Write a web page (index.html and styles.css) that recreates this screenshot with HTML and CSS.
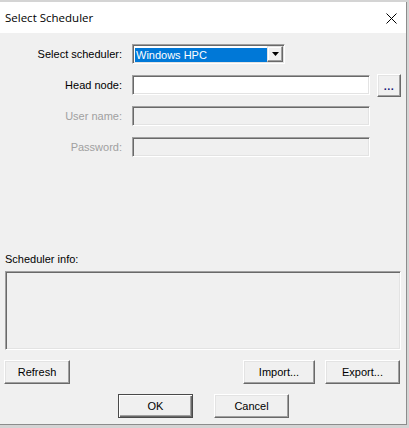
FILE: index.html
```html
<!DOCTYPE html>
<html>
<head>
<meta charset="utf-8">
<link rel="stylesheet" href="styles.css">
</head>
<body>
<div class="dialog">
  <div class="titlebar">
    <span class="title">Select Scheduler</span>
    <svg class="close" width="11" height="11" viewBox="0 0 11 11"><path d="M0.5 0.5 L10.5 10.5 M10.5 0.5 L0.5 10.5" stroke="#000" stroke-width="1" fill="none"/></svg>
  </div>
  <div class="content">
    <div class="form">
      <label class="lbl">Select scheduler:</label>
      <div class="combo">
        <div class="combo-sel">Windows HPC</div>
        <div class="combo-btn"><svg width="7" height="4" viewBox="0 0 7 4"><path d="M0 0 H7 L3.5 4 Z" fill="#000"/></svg></div>
      </div>
      <span></span>

      <label class="lbl">Head node:</label>
      <div class="edit"></div>
      <div class="btn btn-dots">...</div>

      <label class="lbl lbl-disabled">User name:</label>
      <div class="edit edit-disabled"></div>
      <span></span>

      <label class="lbl lbl-disabled">Password:</label>
      <div class="edit edit-disabled"></div>
      <span></span>
    </div>

    <div class="info-label">Scheduler info:</div>
    <div class="info-box"></div>

    <div class="row-actions">
      <div class="btn btn-refresh">Refresh</div>
      <div class="spacer"></div>
      <div class="btn btn-import">Import...</div>
      <div class="btn btn-export">Export...</div>
    </div>

    <div class="row-ok">
      <div class="btn btn-default">OK</div>
      <div class="btn btn-cancel">Cancel</div>
    </div>
  </div>
</div>
</body>
</html>
```

FILE: styles.css
```css
html, body {
  margin: 0;
  padding: 0;
}
body {
  background: #d4d4d4;
  width: 409px;
  height: 428px;
  overflow: hidden;
  font-family: "Liberation Sans", Arial, sans-serif;
  font-size: 11px;
  color: #000;
}
.dialog {
  margin-top: 2px;
  width: 406px;
  border-right: 1px solid #8c8c8c;
  border-bottom: 1px solid #8c8c8c;
  background: #f0f0f0;
}
.titlebar {
  height: 31px;
  background: #fff;
  display: flex;
  align-items: center;
  padding-left: 5px;
  padding-right: 8px;
}
.title {
  font-family: "Open Sans", "Noto Sans", sans-serif;
  font-size: 11.5px;
  flex: 1;
  color: #000;
}
.close {
  margin-right: 1px;
  margin-top: 1px;
}
.content {
  height: 391px;
  box-sizing: border-box;
  padding-top: 11px;
}
.form {
  display: grid;
  grid-template-columns: 132px 245px 24px;
  grid-auto-rows: 20px;
  row-gap: 11px;
  align-items: start;
}
.lbl {
  text-align: right;
  padding-right: 10px;
  line-height: 20px;
  white-space: nowrap;
}
.lbl-disabled {
  color: #a0a0a0;
}
.edit {
  width: 238px;
  height: 20px;
  box-sizing: border-box;
  background: #fff;
  border: 1px solid;
  border-color: #a0a0a0 #fff #fff #a0a0a0;
  box-shadow: inset 1px 1px 0 #696969, inset -1px -1px 0 #e3e3e3;
}
.edit-disabled {
  background: #f0f0f0;
}
.combo {
  width: 153px;
  height: 20px;
  box-sizing: border-box;
  background: #fff;
  border: 1px solid;
  border-color: #a0a0a0 #fff #fff #a0a0a0;
  box-shadow: inset 1px 1px 0 #696969, inset -1px -1px 0 #e3e3e3;
  padding: 2px 1px 1px 2px;
  display: flex;
}
.combo-sel {
  flex: 1;
  background: #0078d7;
  color: #fff;
  line-height: 15px;
  padding-left: 1px;
  margin-top: 1px;
  white-space: nowrap;
  overflow: hidden;
}
.combo-btn {
  width: 16px;
  box-sizing: border-box;
  margin-top: -1px;
  border: 1px solid;
  border-color: #e3e3e3 #696969 #696969 #e3e3e3;
  box-shadow: inset -1px -1px 0 #a0a0a0, inset 1px 1px 0 #fff;
  background: #f0f0f0;
  display: flex;
  align-items: center;
  justify-content: center;
}
.btn {
  box-sizing: border-box;
  height: 24px;
  background: #f0f0f0;
  border: 1px solid;
  border-color: #fff #696969 #696969 #fff;
  box-shadow: inset -1px -1px 0 #a0a0a0, inset 1px 1px 0 #e3e3e3;
  display: flex;
  align-items: center;
  justify-content: center;
  white-space: nowrap;
}
.btn-dots {
  height: 23px;
  margin-top: -1px;
  color: #1b1b7a;
  font-weight: bold;
  letter-spacing: 0.5px;
  padding-top: 1px;
}
.info-label {
  margin-top: 95px;
  margin-left: 5px;
  line-height: 14px;
}
.info-box {
  margin: 5px 0 0 5px;
  width: 396px;
  height: 79px;
  box-sizing: border-box;
  border: 1px solid;
  border-color: #a0a0a0 #fff #fff #a0a0a0;
  box-shadow: inset 1px 1px 0 #696969, inset -1px -1px 0 #e3e3e3;
}
.row-actions {
  display: flex;
  margin-top: 10px;
  padding: 0 6px 0 4px;
  gap: 10px;
}
.spacer {
  flex: 1;
}
.btn-refresh {
  width: 66px;
}
.btn-import {
  width: 72px;
}
.btn-export {
  width: 75px;
}
.row-ok {
  display: flex;
  justify-content: center;
  gap: 21px;
  margin-top: 10px;
  padding-left: 1px;
}
.btn-default {
  width: 75px;
  border-color: #4a4a4a;
  box-shadow: inset 1px 1px 0 #fff, inset -1px -1px 0 #696969, inset -2px -2px 0 #a0a0a0;
}
.btn-cancel {
  width: 75px;
}
```
